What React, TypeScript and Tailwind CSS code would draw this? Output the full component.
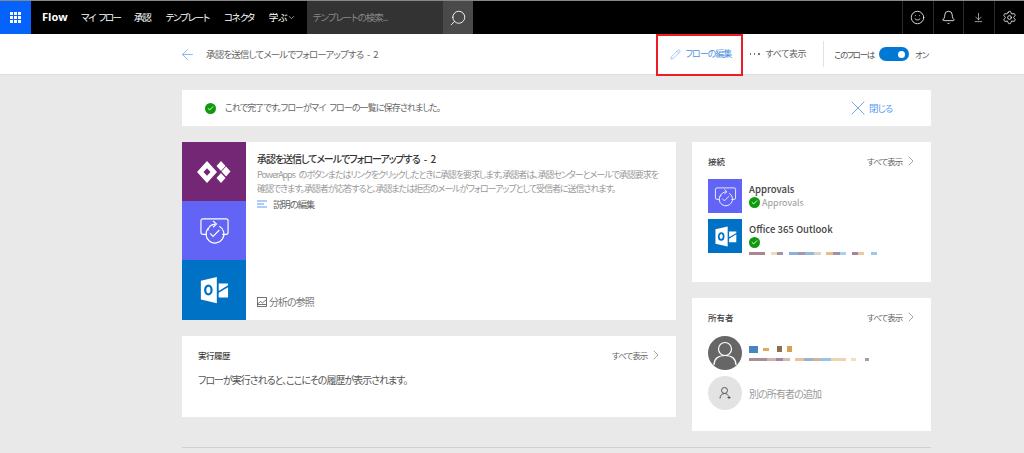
import React from "react";
import { Smile, Bell, ArrowDownToLine, Settings, Search, ArrowLeft, Pencil, X, ChevronRight, ChevronDown, Check } from "lucide-react";

const ApprovalIcon = ({ s }: { s: number }) => (
  <svg width={s} height={s} viewBox="0 0 32 28" fill="none" stroke="white" strokeWidth="1.2">
    <path d="M8 18H4a2 2 0 0 1-2-2V4a2 2 0 0 1 2-2h24a2 2 0 0 1 2 2v12a2 2 0 0 1-2 2h-4" />
    <path d="M9 14a8.500 8.500 0 0 1 8-6.500" />
    <path d="M14.500 4 18 7.400l-3.500 3.200" />
    <path d="M21 9.500a9.300 9.300 0 1 1-11.500 2" />
    <path d="M11.500 17l3 3 6.500-6.500" />
  </svg>
);

const OutlookIcon = ({ s }: { s: number }) => (
  <svg width={s} height={s} viewBox="0 0 32 32" fill="none">
    <path d="M2 6 19 2v28L2 26z" fill="white" />
    <ellipse cx="10" cy="16" rx="3.400" ry="4.600" stroke="#0072c6" strokeWidth="2.400" />
    <path d="M21 9h10v2l-10 6z" fill="white" />
    <path d="M21 19l10-6v11H21z" fill="white" />
  </svg>
);

const Flag = () => (
  <svg width="34" height="22" viewBox="0 0 34 20" preserveAspectRatio="none" fill="white">
    <path fillRule="evenodd" d="M10 0 20 10 10 20 0 10zM10 6.500 6.500 10l3.500 3.500 3.500-3.500z" />
    <path d="M24 0l4.500 4.500L24 9l-4.500-4.500zM29 5l4.500 4.500L29 14l-4.500-4.500zM24 11l4.500 4.500L24 20l-4.500-4.500z" />
  </svg>
);

const Ok = ({ s = 11 }: { s?: number }) => (
  <span className="flex shrink-0 items-center justify-center rounded-full bg-[#0d9b0d]" style={{ width: s, height: s }}>
    <Check size={s - 4} color="white" strokeWidth={3} />
  </span>
);

const Blur = ({ bits }: { bits: [string, number][] }) => (
  <div className="flex h-[3px] items-center blur-[0.4px]">
    {bits.map(([c, w], i) => (
      <span key={i} className="h-[3px] opacity-70" style={{ background: c, width: w }} />
    ))}
  </div>
);

const More = () => (
  <div className="flex items-center gap-[1px] text-[8.5px] tracking-[-1px] text-[#666]">
    <span className="w-[35px] whitespace-nowrap">すべて表示</span>
    <ChevronRight size={16} strokeWidth={0.8} color="#555" />
  </div>
);

export default function App() {
  return (
    <div className="relative h-[453px] w-[1024px] overflow-hidden bg-[#e9e9e9] font-['Noto_Sans_CJK_JP','Noto_Sans',sans-serif] text-[#333] [font-feature-settings:'palt']">
      <div className="h-px bg-[#888]" />
      <header className="flex h-[33px] items-stretch bg-black text-white">
        <div className="flex w-[31px] items-center justify-center bg-[#0563fb]">
          <div className="grid grid-cols-3 gap-[1px]">
            {Array.from({ length: 9 }).map((_, i) => (
              <span key={i} className="size-[3px] bg-white" />
            ))}
          </div>
        </div>
        <span className="ml-[11px] flex w-[39px] items-center font-['Open_Sans',sans-serif] text-[11px] font-bold">Flow</span>
        <nav className="flex w-[226px] items-center gap-[15px] text-[9.5px] tracking-[-1.2px]">
          <span className="w-[38px] whitespace-nowrap tracking-[-1.500px] [word-spacing:3px]">マイ フロー</span>
          <span>承認</span>
          <span>テンプレート</span>
          <span>コネクタ</span>
          <span className="flex items-center tracking-normal">
            学ぶ
            <ChevronDown size={9} strokeWidth={1.5} />
          </span>
        </nav>
        <div className="flex w-[136px] items-center bg-[#333] pl-[6px] text-[9.5px] tracking-[-1px] text-[#8a8a8a]">テンプレートの検索...</div>
        <div className="flex w-[30px] items-center justify-center bg-[#4a4a4a]">
          <Search size={18} strokeWidth={1.2} className="-scale-x-100" />
        </div>
        <div className="ml-auto flex">
          {[Smile, Bell, ArrowDownToLine, Settings].map((I, i) => (
            <div key={i} className="flex w-[30.5px] items-center justify-center border-l border-[#2b2b2b]">
              <I size={i === 2 ? 11 : 15} strokeWidth={1.3} />
            </div>
          ))}
        </div>
      </header>

      <div className="flex h-[41px] items-center border-b border-[#dcdcdc] bg-white pl-[182px]">
        <ArrowLeft size={17} color="#5a9cf0" strokeWidth={1} className="-ml-[3.5px]" />
        <span className="ml-[10.5px] text-[9.5px] tracking-[-0.85px] text-[#666] [word-spacing:2.500px]">承認を送信してメールでフォローアップする - 2</span>
        <div className="ml-auto flex items-center pr-[96px] text-[9px]">
          <Pencil size={11} color="#5a9cf0" strokeWidth={1.2} />
          <span className="ml-[5px] w-[46px] whitespace-nowrap tracking-[-1px] text-[#4f8fe0]">フローの編集</span>
          <span className="ml-[18px] flex w-[10px] justify-between">
            <span className="size-[1.5px] bg-[#777]" />
            <span className="size-[1.5px] bg-[#777]" />
            <span className="size-[1.5px] bg-[#777]" />
          </span>
          <span className="ml-[6px] w-[41px] whitespace-nowrap tracking-[-0.4px] text-[#666]">すべて表示</span>
          <span className="ml-[16.5px] h-[26px] w-px bg-[#e2e2e2]" />
          <span className="ml-[10px] w-[39px] whitespace-nowrap text-[8.5px] tracking-[-1.300px] text-[#555]">このフローは</span>
          <span className="ml-[6px] flex h-[14px] w-[30px] items-center justify-end rounded-full bg-[#0078d4] pr-[4px]">
            <span className="size-[7px] rounded-full bg-white" />
          </span>
          <span className="ml-[6px] w-[13px] whitespace-nowrap text-[8.5px] tracking-[-1px] text-[#555]">オン</span>
        </div>
      </div>

      <main className="ml-[182px] flex w-[749px] flex-col pt-[15px]">
        <section className="flex h-[36px] items-center bg-white pl-[23px] pr-[38px] text-[9px] tracking-[-0.9px] text-[#666] [word-spacing:3px]">
          <Ok />
          <span className="ml-[9px]">これで完了です。フローがマイ フローの一覧に保存されました。</span>
          <X size={24} color="#4f8fe0" strokeWidth={0.8} className="ml-auto" />
          <span className="-ml-[1px] w-[24px] whitespace-nowrap text-[9.5px] tracking-[-1px] text-[#5a9cf0]">閉じる</span>
        </section>

        <div className="mt-[16px] flex gap-[16px]">
          <div className="flex w-[494px] shrink-0 flex-col gap-[16px]">
            <section className="flex h-[178px] bg-white">
              <div className="flex w-[64px] shrink-0 flex-col">
                <div className="flex h-[59px] items-center justify-center bg-[#742774]"><Flag /></div>
                <div className="flex h-[59px] items-center justify-center bg-[#6264f5]"><ApprovalIcon s={31} /></div>
                <div className="flex h-[60px] items-center justify-center bg-[#0072c6]"><OutlookIcon s={30} /></div>
              </div>
              <div className="flex flex-1 flex-col pl-[11px] pr-[14px] pt-[9px]">
                <h2 className="text-[10px] leading-[15px] font-medium tracking-[-1.050px] text-[#333] [word-spacing:3px]">承認を送信してメールでフォローアップする - 2</h2>
                <p className="mt-[2px] whitespace-nowrap text-[9px] leading-[13.500px] tracking-[-1.050px] text-[#999] [word-spacing:3px]">
                  PowerApps のボタンまたはリンクをクリックしたときに承認を要求します。承認者は、承認センターとメールで承認要求を
                  <br />
                  確認できます。承認者が応答すると、承認または拒否のメールがフォローアップとして受信者に送信されます。
                </p>
                <div className="mt-[2px] flex items-center text-[9.5px] tracking-[-1.200px] text-[#666]">
                  <svg width="11" height="8" viewBox="0 0 11 8" stroke="#5a9cf0" strokeWidth="1">
                    <path d="M0 1h10M0 4h7M0 7h10" />
                  </svg>
                  <span className="ml-[5px]">説明の編集</span>
                </div>
                <div className="mt-auto mb-[11px] flex items-center gap-[2px] text-[10px] tracking-[-1px] text-[#777]">
                  <svg width="10" height="10" viewBox="0 0 10 10" fill="none" stroke="#666" strokeWidth="0.9">
                    <rect x="0.5" y="0.5" width="9" height="9" />
                    <path d="M0.500 7 3.500 4.500 5.500 6 9.500 2.500" />
                    <path d="M0.500 7.500h9" />
                  </svg>
                  <span>分析の参照</span>
                </div>
              </div>
            </section>

            <section className="h-[81px] bg-white pl-[16px] pr-[12px] pt-[11px]">
              <div className="flex items-center justify-between">
                <h3 className="text-[8.500px] font-medium tracking-[-0.500px] text-[#444]">実行履歴</h3>
                <More />
              </div>
              <p className="mt-[9px] text-[10px] tracking-[-1px] text-[#555]">フローが実行されると、ここにその履歴が表示されます。</p>
            </section>
          </div>

          <div className="flex w-[239px] flex-col gap-[16px]">
            <section className="h-[140px] bg-white pl-[16px] pr-[12px] pt-[11px]">
              <div className="flex items-center justify-between">
                <h3 className="text-[8.500px] font-medium text-[#444]">接続</h3>
                <More />
              </div>
              <div className="mt-[10px] flex gap-[7px]">
                <div className="flex size-[34px] items-center justify-center bg-[#6264f5]"><ApprovalIcon s={23} /></div>
                <div className="flex flex-col pt-[4px] text-[9.500px] leading-[13px]">
                  <span className="font-medium text-[#444]">Approvals</span>
                  <span className="flex items-center gap-[2px] text-[9px] text-[#999]"><Ok />Approvals</span>
                </div>
              </div>
              <div className="mt-[6px] flex gap-[7px]">
                <div className="flex size-[34px] items-center justify-center bg-[#0072c6]"><OutlookIcon s={23} /></div>
                <div className="flex flex-col pt-[4px] text-[9.500px] leading-[13px]">
                  <span className="font-medium text-[#444]">Office 365 Outlook</span>
                  <span className="mt-px"><Ok /></span>
                  <div className="mt-[4px]">
                    <Blur bits={[["#8a5060", 16], ["#fff", 6], ["#e8c8a0", 6], ["#7a6a80", 6], ["#fff", 6], ["#5a90d0", 9], ["#806a90", 7], ["#60a0d0", 9], ["#d0c0b0", 7], ["#fff", 5], ["#e0a060", 7], ["#806080", 7], ["#80c0e0", 6], ["#fff", 6], ["#805070", 6], ["#e0b080", 6], ["#fff", 7], ["#70b0e0", 6]]} />
                  </div>
                </div>
              </div>
            </section>

            <section className="h-[133px] bg-white pl-[16px] pr-[12px] pt-[11px]">
              <div className="flex items-center justify-between">
                <h3 className="text-[8.500px] font-medium text-[#444]">所有者</h3>
                <More />
              </div>
              <div className="mt-[11px] flex items-center gap-[7px]">
                <div className="flex size-[34px] items-center justify-center rounded-full bg-[#666]">
                  <svg width="24" height="26" viewBox="0 0 24 26" fill="none" stroke="white" strokeWidth="1.200">
                    <circle cx="12" cy="9" r="6.500" />
                    <path d="M1 25c0-6 4-9.500 11-9.500s11 3.500 11 9.500" />
                  </svg>
                </div>
                <div className="flex flex-col gap-[5px]">
                  <div className="flex h-[7px] items-center gap-[5px] blur-[0.4px]">
                    <span className="h-[7px] w-[9px] bg-[#4a84c0]" />
                    <span className="h-[3px] w-[6px] bg-[#e0a860]" />
                    <span className="ml-[3px] h-[6px] w-[5px] bg-[#8a7050]" />
                    <span className="h-[6px] w-[5px] bg-[#d8a050]" />
                  </div>
                  <Blur bits={[["#80606a", 18], ["#c09080", 9], ["#7a5080", 7], ["#c0a090", 7], ["#fff", 5], ["#e0a870", 9], ["#7090c0", 9], ["#c09070", 7], ["#70a8e0", 11], ["#e8c090", 15], ["#fff", 5], ["#f0d0a0", 5], ["#fff", 9], ["#777", 4]]} />
                </div>
              </div>
              <div className="mt-[6px] flex items-center gap-[7px]">
                <div className="flex size-[34px] items-center justify-center rounded-full bg-[#e3e3e3]">
                  <svg width="12" height="12" viewBox="0 0 12 12" fill="none" stroke="#555" strokeWidth="1">
                    <circle cx="5.500" cy="3.500" r="3" />
                    <path d="M1 11.500c0-3 2-5 4.500-5 1.500 0 3 .8 3.800 2.200" />
                    <path d="M10 9v3M8.500 10.500h3" />
                  </svg>
                </div>
                <span className="text-[10px] tracking-[-0.900px] text-[#999]">別の所有者の追加</span>
              </div>
            </section>
          </div>
        </div>

        <div className="mt-[16px] h-px bg-[#d0d0d0]" />
      </main>

      <div className="absolute left-[656px] top-[34px] h-[42px] w-[87px] border-2 border-[#ee1c25]" />
    </div>
  );
}
